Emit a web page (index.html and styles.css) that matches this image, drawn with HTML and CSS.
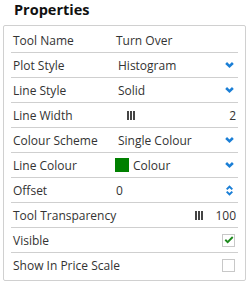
FILE: index.html
```html
<!DOCTYPE html>
<html lang="en">
<head>
    <meta charset="UTF-8">
    <title>Properties</title>
    <link rel="stylesheet" href="styles.css">
</head>
<body>
    <h1 class="title">Properties</h1>
    <div class="panel">
        <div class="row">
            <span class="label">Tool Name</span>
            <span class="value">Turn Over</span>
        </div>
        <div class="row">
            <span class="label">Plot Style</span>
            <span class="value shift">Histogram</span>
            <svg class="chev" viewBox="0 0 10 7"><path d="M0 2.2 L2.1 0 L5 2.9 L7.9 0 L10 2.2 L5 7 Z"/></svg>
        </div>
        <div class="row">
            <span class="label">Line Style</span>
            <span class="value shift">Solid</span>
            <svg class="chev" viewBox="0 0 10 7"><path d="M0 2.2 L2.1 0 L5 2.9 L7.9 0 L10 2.2 L5 7 Z"/></svg>
        </div>
        <div class="row">
            <span class="label">Line Width</span>
            <span class="value"><span class="bars bars-lw"><i></i><i></i><i></i></span></span>
            <span class="num">2</span>
        </div>
        <div class="row">
            <span class="label">Colour Scheme</span>
            <span class="value shift">Single Colour</span>
            <svg class="chev" viewBox="0 0 10 7"><path d="M0 2.2 L2.1 0 L5 2.9 L7.9 0 L10 2.2 L5 7 Z"/></svg>
        </div>
        <div class="row">
            <span class="label">Line Colour</span>
            <span class="value"><span class="swatch"></span>Colour</span>
            <svg class="chev" viewBox="0 0 10 7"><path d="M0 2.2 L2.1 0 L5 2.9 L7.9 0 L10 2.2 L5 7 Z"/></svg>
        </div>
        <div class="row">
            <span class="label">Offset</span>
            <span class="value">0</span>
            <svg class="spin" viewBox="0 0 8 12"><path d="M0 4 L4 0 L8 4 L6.4 5.5 L4 3.1 L1.6 5.5 Z M0 8 L1.6 6.5 L4 8.9 L6.4 6.5 L8 8 L4 12 Z"/></svg>
        </div>
        <div class="row">
            <span class="label wide">Tool Transparency</span>
            <span class="bars"><i></i><i></i><i></i></span>
            <span class="num">100</span>
        </div>
        <div class="row">
            <span class="label">Visible</span>
            <span class="value"></span>
            <span class="check on"><svg viewBox="0 0 12 10"><path d="M0.5 5.5 L2.2 3.8 L4.3 5.9 L9.8 0.4 L11.5 2.1 L4.3 9.3 Z"/></svg></span>
        </div>
        <div class="row last">
            <span class="label wide">Show In Price Scale</span>
            <span class="value"></span>
            <span class="check"></span>
        </div>
    </div>
</body>
</html>
```

FILE: styles.css
```css
*{
    margin: 0;
    padding: 0;
    box-sizing: border-box;
}
body{
    font-family: "Open Sans", "Noto Sans", sans-serif;
    font-size: 12px;
    color: #333;
    background: #fff;
    width: 251px;
}
.title{
    font-size: 14.5px;
    font-weight: 700;
    color: #111;
    line-height: 14px;
    padding: 3px 0 0 14px;
    height: 25px;
}
.panel{
    margin: 0 5px 0 3px;
    border: 1px solid #d0d0d0;
    border-radius: 2px;
    padding: 2px 7px 0;
    height: 256px;
}
.row{
    display: flex;
    align-items: center;
    height: 25px;
    border-bottom: 1px solid #cfcfcf;
    padding: 0 2px;
}
.row.last{
    border-bottom: none;
    height: 24px;
}
.label{
    width: 103px;
    flex: none;
    white-space: nowrap;
}
.label.wide{
    width: auto;
    flex: 1;
}
.value{
    flex: 1;
    display: flex;
    align-items: center;
    white-space: nowrap;
}
.value.shift{
    padding-left: 2px;
}
.chev{
    width: 9px;
    height: 6px;
    fill: #1b7fd6;
    margin-right: 2px;
}
.spin{
    width: 7px;
    height: 11px;
    fill: #1b7fd6;
    margin-right: 3px;
}
.num{
    text-align: right;
}
.bars{
    display: flex;
    gap: 1px;
    height: 9px;
    margin-right: 12px;
}
.bars-lw{
    margin-left: 11px;
}
.bars i{
    display: block;
    width: 2px;
    height: 9px;
    background: #444;
}
.swatch{
    display: inline-block;
    width: 14px;
    height: 14px;
    background: #008000;
    margin-right: 4px;
    margin-left: -1px;
}
.check{
    width: 13px;
    height: 13px;
    border: 1px solid #c8c8c8;
    display: flex;
    align-items: center;
    justify-content: center;
    margin-right: 1px;
}
.check svg{
    width: 10px;
    height: 8px;
    fill: #1f8a1f;
}
```
